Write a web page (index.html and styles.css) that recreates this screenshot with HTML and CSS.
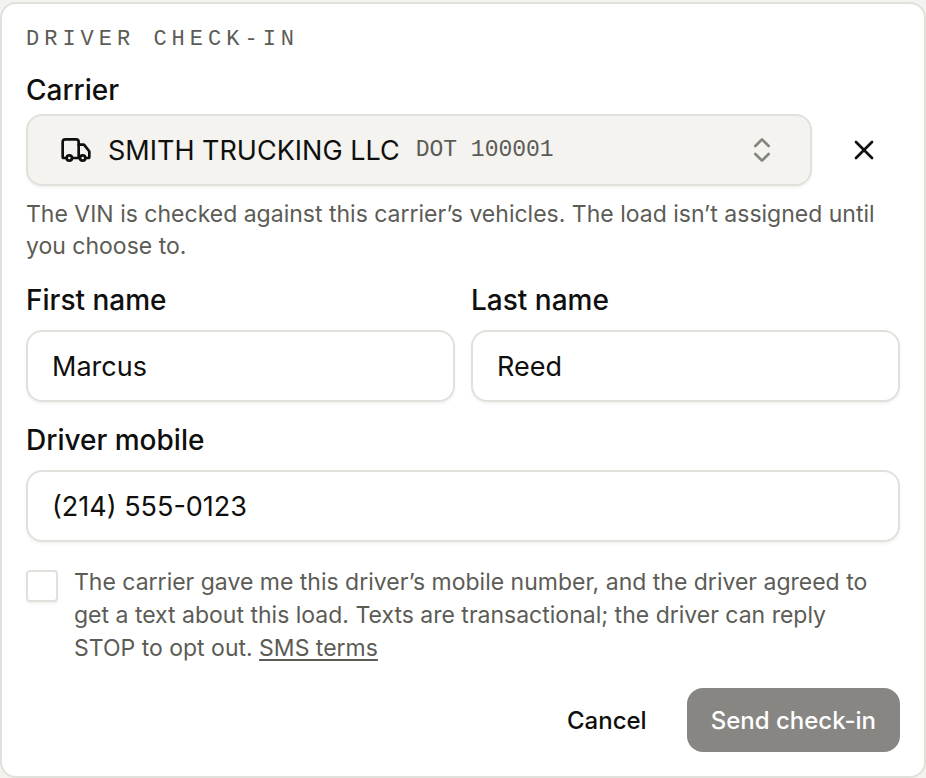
FILE: index.html
```html
<!DOCTYPE html>
<html lang="en">
<head>
<meta charset="utf-8">
<title>Driver check-in</title>
<link rel="stylesheet" href="styles.css">
</head>
<body>
<form class="card">
  <h1 class="eyebrow">DRIVER CHECK-IN</h1>
  <div class="field carrier-field">
    <label class="label" for="carrier">Carrier</label>
    <div class="carrier-row">
      <button class="picker" id="carrier" type="button">
        <svg class="truck" viewBox="0 0 24 24" aria-hidden="true"><path d="M14 18V6a2 2 0 0 0-2-2H4a2 2 0 0 0-2 2v11a1 1 0 0 0 1 1h2"/><path d="M15 18H9"/><path d="M19 18h2a1 1 0 0 0 1-1v-3.650a1 1 0 0 0-.22-.624l-3.480-4.350A1 1 0 0 0 17.520 8H14"/><circle cx="17" cy="18" r="2"/><circle cx="7" cy="18" r="2"/></svg>
        <span class="carrier-name">SMITH TRUCKING LLC</span>
        <span class="dot">DOT 100001</span>
        <svg class="chevrons" viewBox="0 0 24 24" aria-hidden="true"><path d="m7 15 5 5 5-5"/><path d="m7 9 5-5 5 5"/></svg>
      </button>
      <button class="clear" type="button" aria-label="Clear carrier">
        <svg viewBox="0 0 24 24" aria-hidden="true"><path d="M18 6 6 18"/><path d="m6 6 12 12"/></svg>
      </button>
    </div>
    <p class="hint">The VIN is checked against this carrier’s vehicles. The load isn’t assigned until you choose to.</p>
  </div>
  <div class="names">
    <div class="field">
      <label class="label" for="first">First name</label>
      <input class="input" id="first" type="text" value="Marcus">
    </div>
    <div class="field">
      <label class="label" for="last">Last name</label>
      <input class="input" id="last" type="text" value="Reed">
    </div>
  </div>
  <div class="field">
    <label class="label" for="mobile">Driver mobile</label>
    <input class="input" id="mobile" type="tel" value="(214) 555-0123">
  </div>
  <div class="consent">
    <input class="check" id="consent" type="checkbox">
    <p class="consent-text"><label for="consent">The carrier gave me this driver’s mobile number, and the driver agreed to get a text about this load. Texts are transactional; the driver can reply<br>STOP to opt out.</label> <a href="#terms">SMS terms</a></p>
  </div>
  <div class="actions">
    <button class="button" type="button">Cancel</button>
    <button class="button primary" type="submit" disabled>Send check-in</button>
  </div>
</form>
</body>
</html>
```
FILE: styles.css
```css
* { box-sizing: border-box; }
body {
  margin: 0;
  padding: 2px 0 0;
  background: #f4f3ef;
  color: #0f0f0e;
  font-family: Inter, "Liberation Sans", sans-serif;
}
button, input { font: inherit; color: inherit; }
svg { fill: none; stroke: currentColor; stroke-width: 2; stroke-linecap: round; stroke-linejoin: round; flex: none; }
.card {
  display: flex;
  flex-direction: column;
  gap: 24px;
  padding: 20px 24px 24px;
  border: 2px solid #e1e1dc;
  border-radius: 16px;
  background: #fff;
}
.eyebrow {
  margin: 0 0 -4px;
  font: 400 22px/32px "Liberation Mono", monospace;
  letter-spacing: 5px;
  color: #5c5c56;
}
.field { display: flex; flex-direction: column; gap: 16px; min-width: 0; }
.carrier-field { gap: 12px; }
.carrier-field .label { margin-bottom: -2px; }
.label { font-size: 28px; line-height: 28px; font-weight: 500; }
.carrier-row { display: flex; gap: 16px; }
.picker {
  display: flex;
  flex: 1;
  align-items: center;
  min-width: 0;
  height: 72px;
  padding: 0 32px;
  border: 2px solid #e1e1dc;
  border-radius: 16px;
  background: #f4f3ef;
  box-shadow: 0 2px 3px #0000000d;
  font-size: 27px;
}
.truck { width: 32px; height: 32px; margin-right: 16px; }
.carrier-name { margin-right: 16px; white-space: nowrap; }
.dot { font: 23px "Liberation Mono", monospace; color: #5c5c56; white-space: nowrap; }
.chevrons { width: 32px; height: 32px; margin-left: auto; color: #858580; }
.clear { display: grid; place-items: center; width: 72px; padding: 0; border: 0; background: none; }
.clear svg { width: 32px; height: 32px; }
.hint { margin: 0; font-size: 23px; line-height: 32px; color: #5c5c56; }
.names { display: grid; grid-template-columns: 1fr 1fr; gap: 16px; }
.input {
  width: 100%;
  height: 72px;
  padding: 0 24px;
  border: 2px solid #e1e1dc;
  border-radius: 16px;
  background: #fff;
  box-shadow: 0 2px 3px #0000000d;
  font-size: 27px;
}
.consent { display: flex; gap: 16px; margin-bottom: -1px; }
.check {
  appearance: none;
  flex: none;
  width: 32px;
  height: 32px;
  margin: 4px 0 0;
  border: 2px solid #e1e1dc;
  border-radius: 4px;
  background: #fff;
  box-shadow: 0 2px 3px #0000000d;
}
.consent-text { margin: 0; font-size: 23px; line-height: 33px; color: #5c5c56; }
.consent-text a { color: inherit; text-decoration-thickness: 2px; text-underline-offset: 3px; }
.actions { display: flex; justify-content: flex-end; gap: 16px; }
.button {
  height: 64px;
  padding: 0 24px;
  border: 0;
  border-radius: 16px;
  background: none;
  font-size: 24px;
  font-weight: 500;
}
.primary { background: #878683; color: #fff; }
```
